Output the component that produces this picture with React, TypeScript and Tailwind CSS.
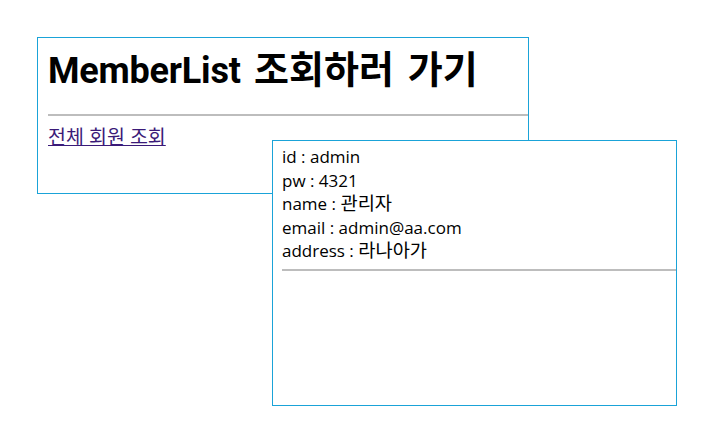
import React from "react";

export default function App() {
  const font = { fontFamily: '"Open Sans", "Noto Sans CJK KR", sans-serif' };
  const ko = "text-[1.1em] leading-none";
  return (
    <div className="relative w-[720px] h-[442px] bg-white text-black" style={font}>
      <div className="absolute left-[37px] top-[37px] w-[492px] h-[157px] border border-[#1aa3d8] pl-[10px] pt-[8px]">
        <h1 className="text-[36px] font-bold leading-[48px] whitespace-nowrap">
          <span className="font-['Roboto'] tracking-[-0.2px]">MemberList</span>{" "}
          <span className="text-[38px] leading-none ml-[4px] [word-spacing:4px]">조회하러 가기</span>
        </h1>
        <hr className="mt-[19px] border-t-2 border-[#bdbdbd]" />
        <a href="#" className="block mt-[9px] text-[19.5px] leading-[24px] text-[#3a1a78] underline w-fit">전체 회원 조회</a>
      </div>
      <div className="absolute left-[272px] top-[140px] w-[405px] h-[266px] border border-[#1aa3d8] bg-white pl-[9px] pt-[4px]">
        <div className="text-[17px] leading-[23.5px]">
          <div>id : admin</div>
          <div>pw : 4321</div>
          <div>name : <span className={ko}>관리자</span></div>
          <div>email : admin@aa.com</div>
          <div>address : <span className={ko}>라나아가</span></div>
        </div>
        <hr className="mt-[6px] border-t-2 border-[#bdbdbd]" />
      </div>
    </div>
  );
}
